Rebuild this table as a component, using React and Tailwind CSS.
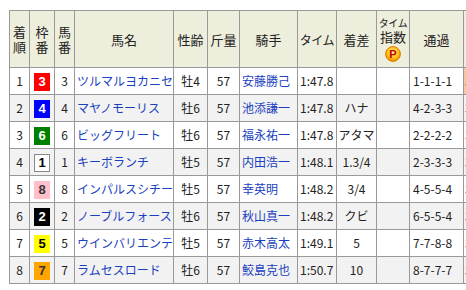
import React from "react";

const frameStyles = {
  1: "bg-white text-black border border-[#888]",
  2: "bg-black text-white",
  3: "bg-[#ff0000] text-white",
  4: "bg-[#0000ff] text-white",
  5: "bg-[#ffff00] text-black",
  6: "bg-[#008000] text-white",
  7: "bg-[#ffa500] text-[#333]",
  8: "bg-[#ffc0cb] text-[#333]",
};

const rows = [
  [1, 3, 3, "ツルマルヨカニセ", "牡4", 57, "安藤勝己", "1:47.8", "", "1-1-1-1", "35.9"],
  [2, 4, 4, "マヤノモーリス", "牡6", 57, "池添謙一", "1:47.8", "ハナ", "4-2-3-3", "35.6"],
  [3, 6, 6, "ビッグフリート", "牡6", 57, "福永祐一", "1:47.8", "アタマ", "2-2-2-2", "35.8"],
  [4, 1, 1, "キーボランチ", "牡5", 57, "内田浩一", "1:48.1", "1.3/4", "2-3-3-3", "36.1"],
  [5, 8, 8, "インパルスシチー", "牡5", 57, "幸英明", "1:48.2", "3/4", "4-5-5-4", "36.0"],
  [6, 2, 2, "ノーブルフォース", "牡6", 57, "秋山真一", "1:48.2", "クビ", "6-5-5-4", "35.9"],
  [7, 5, 5, "ウインバリエンテ", "牡5", 57, "赤木高太", "1:49.1", "5", "7-7-8-8", "36.4"],
  [8, 7, 7, "ラムセスロード", "牡6", 57, "鮫島克也", "1:50.7", "10", "8-7-7-7", "37.6"],
];

const widths = [20, 25, 20, 99, 34, 32, 58, 39, 40, 33, 54, 50];

function PIcon() {
  return (
    <svg width="16" height="16" viewBox="0 0 16 16" className="block">
      <defs>
        <radialGradient id="pg" cx="50%" cy="40%" r="60%">
          <stop offset="0%" stopColor="#fff27a" />
          <stop offset="60%" stopColor="#ffc21a" />
          <stop offset="100%" stopColor="#f08a00" />
        </radialGradient>
      </defs>
      <circle cx="8" cy="8" r="7.4" fill="url(#pg)" stroke="#e07b00" strokeWidth="1" />
      <text x="8" y="12.2" textAnchor="middle" fontSize="11" fontWeight="bold" fill="#c00000" fontFamily="'Liberation Sans', Arial, sans-serif">P</text>
    </svg>
  );
}

const td = "border border-[#999] h-[27px] p-0 text-[12px] whitespace-nowrap overflow-hidden";
const th = "border border-[#999] bg-[#eeeedc] p-0 text-[13px] font-normal text-[#222] leading-[15px] whitespace-nowrap overflow-hidden";

function Stack({ a, b }) {
  return (
    <div className="flex flex-col items-center">
      <span className="block leading-[15px]">{a}</span>
      <span className="block leading-[15px]">{b}</span>
    </div>
  );
}

export default function App() {
  return (
    <div className="w-[466px] h-[290px] overflow-hidden bg-white" style={{ fontFamily: "'Noto Sans CJK JP', 'Noto Sans', sans-serif" }}>
      <div className="pl-[9px] pt-[10px]">
        <table className="table-fixed border-collapse w-[505px] text-[#222]">
          <colgroup>
            {widths.map((w, i) => (
              <col key={i} style={{ width: w }} />
            ))}
          </colgroup>
          <thead>
            <tr className="h-[57px]">
              <th className={th}><Stack a="着" b="順" /></th>
              <th className={th}><Stack a="枠" b="番" /></th>
              <th className={th}><Stack a="馬" b="番" /></th>
              <th className={th}>馬名</th>
              <th className={th}>性齢</th>
              <th className={th}>斤量</th>
              <th className={th}>騎手</th>
              <th className={th}><span className="text-[12px] tracking-[-0.5px]">タイム</span></th>
              <th className={th}>着差</th>
              <th className={th}>
                <div className="flex flex-col items-center">
                  <span className="text-[10px] leading-[12px] tracking-[-0.5px]">タイム</span>
                  <span className="leading-[15px]">指数</span>
                  <span className="mt-[2px]"><PIcon /></span>
                </div>
              </th>
              <th className={th}>通過</th>
              <th className={th}>上り</th>
            </tr>
          </thead>
          <tbody>
            {rows.map((r, i) => (
              <tr key={i} className={i % 2 === 1 ? "bg-[#f2f2f2]" : "bg-white"}>
                <td className={td + " text-center"}>{r[0]}</td>
                <td className={td + " text-center"}>
                  <span className={"inline-flex items-center justify-center w-[16px] h-[18px] align-middle font-bold text-[13px] " + frameStyles[r[1]]} style={{ fontFamily: "'Liberation Sans', Arial, sans-serif" }}>
                    {r[1]}
                  </span>
                </td>
                <td className={td + " text-center"}>{r[2]}</td>
                <td className={td + " pl-[2px] text-[#1a3fbf]"}>{r[3]}</td>
                <td className={td + " text-center"}>{r[4]}</td>
                <td className={td + " text-center"}>{r[5]}</td>
                <td className={td + " pl-[2px] text-[#1a3fbf]"}>{r[6]}</td>
                <td className={td + " pl-[2px]"}>{r[7]}</td>
                <td className={td + " text-center"}>{r[8]}</td>
                <td className={td}></td>
                <td className={td + " pl-[3px]"}>{r[9]}</td>
                <td className={td + " pl-[1px] " + (i === 0 ? "bg-[#f5c9a0]" : "")}>{r[10]}</td>
              </tr>
            ))}
          </tbody>
        </table>
      </div>
    </div>
  );
}
